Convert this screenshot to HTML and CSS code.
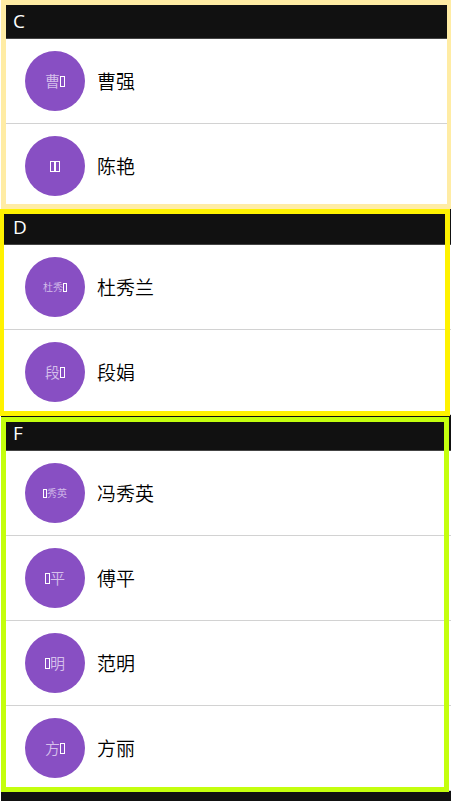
FILE: index.html
```html
<!DOCTYPE html>
<html lang="zh-CN">
<head>
<meta charset="utf-8">
<meta name="viewport" content="width=device-width, initial-scale=1">
<title>C D F</title>
<link rel="stylesheet" href="styles.css">
</head>
<body>
<main class="contacts">
  <section class="group group-c">
    <h2 class="letter">C</h2>
    <ul class="list">
      <li class="contact"><span class="avatar">曹<i class="box"></i></span><span class="name">曹强</span></li>
      <li class="contact"><span class="avatar"><i class="box"></i><i class="box"></i></span><span class="name">陈艳</span></li>
    </ul>
  </section>
  <section class="group group-d">
    <h2 class="letter">D</h2>
    <ul class="list">
      <li class="contact"><span class="avatar avatar-small">杜秀<i class="box"></i></span><span class="name">杜秀兰</span></li>
      <li class="contact"><span class="avatar">段<i class="box"></i></span><span class="name">段娟</span></li>
    </ul>
  </section>
  <section class="group group-f">
    <h2 class="letter">F</h2>
    <ul class="list">
      <li class="contact"><span class="avatar avatar-small"><i class="box"></i>秀英</span><span class="name">冯秀英</span></li>
      <li class="contact"><span class="avatar"><i class="box"></i>平</span><span class="name">傅平</span></li>
      <li class="contact"><span class="avatar"><i class="box"></i>明</span><span class="name">范明</span></li>
      <li class="contact"><span class="avatar">方<i class="box"></i></span><span class="name">方丽</span></li>
    </ul>
  </section>
  <div class="next-group"></div>
</main>
</body>
</html>
```
FILE: styles.css
```css
* {
  box-sizing: border-box;
}

body {
  margin: 0;
  background: #fff;
  color: #000;
  font-family: "Open Sans", "Noto Sans CJK SC", sans-serif;
  font-size: 19px;
  line-height: 28px;
  overflow-x: hidden;
}

.contacts {
  display: flex;
  flex-direction: column;
  min-height: 100vh;
  padding: 3px 0 0 1px;
  overflow: hidden;
}

.group {
  position: relative;
}

.letter {
  height: 36px;
  margin: 0;
  padding: 4px 12px 3px;
  border-bottom: 1px solid #444;
  background: #111;
  color: #fff;
  font-size: 19px;
  font-weight: 400;
}

.list {
  margin: 0;
  padding: 0;
  list-style: none;
}

.contact {
  display: flex;
  align-items: center;
  gap: 12px;
  height: 85px;
  padding: 0 24px;
  border-bottom: 1px solid #d2d2d2;
}

.name {
  font-family: "Noto Sans CJK SC", sans-serif;
  font-weight: 350;
}

.avatar {
  display: flex;
  align-items: center;
  justify-content: center;
  flex: none;
  width: 60px;
  height: 60px;
  border-radius: 50%;
  background: #884fc3;
  color: #d6c0eb;
  font-family: "Noto Sans CJK SC", sans-serif;
  font-size: 15px;
  font-weight: 350;
}

.avatar-small {
  font-size: 10px;
}

.box {
  width: 5px;
  height: 11px;
  border: 1px solid #fff;
}

.avatar-small .box {
  width: 4px;
  height: 9px;
}

/* Coloured frames laid over each group */
.group::after {
  content: "";
  position: absolute;
  z-index: 1;
  border: 5px solid;
  pointer-events: none;
}

.group-c::after {
  inset: -3px -1px 0 0;
  border-color: #ffeca4;
}

.group-d::after {
  inset: 0 1px -1px -2px;
  border-color: #fff200;
}

.group-f::after {
  inset: 2px 2px -1px 0;
  border-color: #c4ff0e;
}

.next-group {
  flex: 1;
  background: #111;
}
```
